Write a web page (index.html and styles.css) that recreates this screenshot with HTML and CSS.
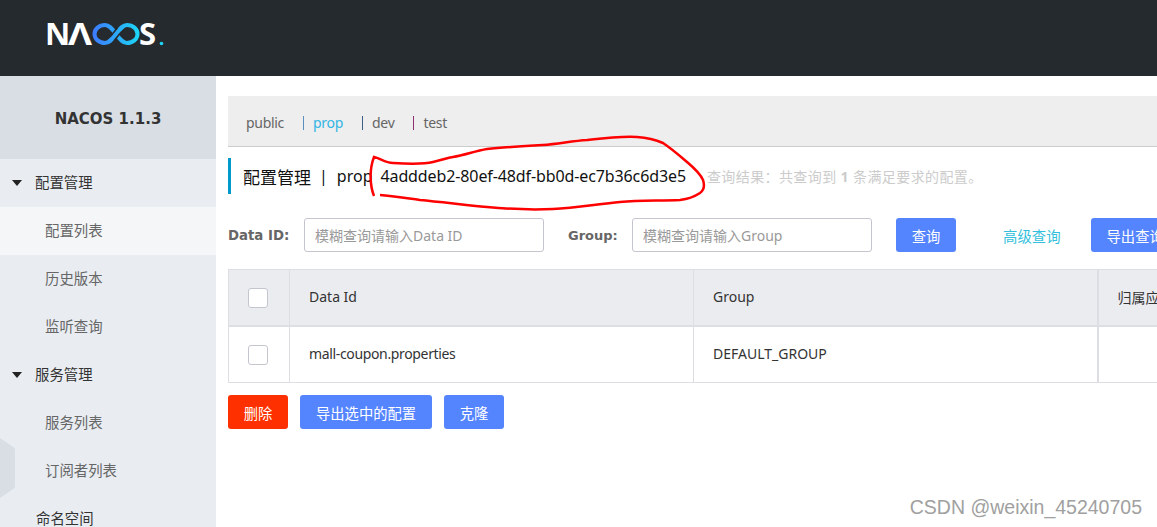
FILE: index.html
```html
<!DOCTYPE html>
<html lang="zh-CN">
<head>
    <meta charset="UTF-8">
    <title>Nacos</title>
    <link rel="stylesheet" href="styles.css">
</head>
<body>
    <header class="header">
        <svg class="logo" width="128" height="44" viewBox="-4 0 128 44">
            <defs>
                <linearGradient id="loop" gradientUnits="userSpaceOnUse" x1="46" x2="92" y1="22" y2="22">
                    <stop offset="0" stop-color="#3d7bff"/>
                    <stop offset="1" stop-color="#1cd6f5"/>
                </linearGradient>
            </defs>
            <text class="logo-letter" x="-2" y="33">N</text>
            <text class="logo-letter" x="21" y="33" textLength="24" lengthAdjust="spacingAndGlyphs">Λ</text>
            <path d="M69 22C65.500 17.500 62.500 13 58 13A10.500 9 0 0 0 58 31C62.500 31 65.500 26.500 69 22C72.500 17.500 75.500 13 80 13A10.500 9 0 0 1 80 31C75.500 31 72.500 26.500 69 22Z" fill="none" stroke="url(#loop)" stroke-width="4"/>
            <path d="M65.500 26.500L72.500 17.500" stroke="#252a2f" stroke-width="7"/>
            <path d="M62 29.500C65 27.500 67 24.500 69 22C71 19.500 73 16.500 76 14.500" fill="none" stroke="url(#loop)" stroke-width="4"/>
            <text class="logo-letter" x="92" y="33">S</text>
            <circle cx="114.500" cy="31.500" r="1.800" fill="#1cd6f5"/>
        </svg>
    </header>
    <div class="layout">
        <aside class="sidebar">
            <div class="version">NACOS 1.1.3</div>
            <div class="menu-group"><span class="caret"></span>配置管理</div>
            <div class="menu-item active">配置列表</div>
            <div class="menu-item">历史版本</div>
            <div class="menu-item">监听查询</div>
            <div class="menu-group"><span class="caret"></span>服务管理</div>
            <div class="menu-item">服务列表</div>
            <div class="menu-item">订阅者列表</div>
            <div class="menu-group plain">命名空间</div>
            <div class="hexagon"></div>
        </aside>
        <main class="content">
            <div class="tabs">
                <span class="tab">public</span>
                <span class="tab"><i class="sep sep-blue"></i><span class="current">prop</span></span>
                <span class="tab"><i class="sep sep-navy"></i>dev</span>
                <span class="tab"><i class="sep sep-purple"></i>test</span>
            </div>
            <div class="title">
                <span class="title-main">配置管理</span>
                <span class="title-bar">|</span>
                <span class="title-ns">prop</span>
                <span class="title-id">4adddeb2-80ef-48df-bb0d-ec7b36c6d3e5</span>
                <span class="title-note">查询结果：共查询到 <b>1</b> 条满足要求的配置。</span>
            </div>
            <div class="search">
                <label class="search-label">Data ID:</label>
                <input class="search-input" placeholder="模糊查询请输入Data ID">
                <label class="search-label label-group">Group:</label>
                <input class="search-input" placeholder="模糊查询请输入Group">
                <button class="btn btn-short btn-query">查询</button>
                <a class="advanced">高级查询</a>
                <button class="btn btn-export">导出查询结果</button>
            </div>
            <table class="config-table">
                <colgroup>
                    <col class="col-check"><col class="col-wide"><col class="col-wide"><col class="col-app">
                </colgroup>
                <thead>
                    <tr>
                        <th class="cell-check"><span class="checkbox"></span></th>
                        <th>Data Id</th>
                        <th class="cell-group">Group</th>
                        <th>归属应用</th>
                    </tr>
                </thead>
                <tbody>
                    <tr>
                        <td class="cell-check"><span class="checkbox"></span></td>
                        <td class="cell-name">mall-coupon.properties</td>
                        <td class="cell-group">DEFAULT_GROUP</td>
                        <td></td>
                    </tr>
                </tbody>
            </table>
            <div class="actions">
                <button class="btn btn-short btn-danger">删除</button>
                <button class="btn">导出选中的配置</button>
                <button class="btn btn-short">克隆</button>
            </div>
        </main>
    </div>
    <svg class="scribble" width="1157" height="527" viewBox="0 0 1157 527">
        <path d="M374 196C370 186 369 170 374 157C380 158 385 163 393 163C410 164 425 164 433 162C442 160 447 158 453 157C465 155 475 151 487 149C505 147 525 146 543 145C558 144 572 141 587 140C605 138 622 136 637 137C650 138 656 140 663 143C672 149 680 156 687 162C694 168 700 173 703 180C705 186 704 190 700 193C694 197 688 199 680 200C660 201 640 200 620 202C598 204 575 208 553 209C530 210 508 209 487 207C465 205 442 202 420 200C405 198 392 196 380 195" fill="none" stroke="#f00" stroke-width="2.500"/>
    </svg>
    <div class="watermark">CSDN @weixin_45240705</div>
</body>
</html>
```

FILE: styles.css
```css
html, body {
    height: 100%;
}
body {
    margin: 0;
    overflow: hidden;
    position: relative;
    font-family: "Noto Sans", "Noto Sans CJK SC", sans-serif;
    font-size: 14px;
    color: #333;
    background: #fff;
}
.header {
    height: 76px;
    background: #252a2f;
    padding: 0 0 9px 43px;
    display: flex;
    align-items: center;
    box-sizing: border-box;
}
.logo-letter {
    font-family: "Open Sans", sans-serif;
    font-size: 31px;
    font-weight: 700;
    fill: #fff;
}
.layout {
    display: flex;
    height: 451px;
}
.sidebar {
    width: 216px;
    flex: none;
    background: #e9edf2;
    position: relative;
    overflow: hidden;
    font-size: 14.400px;
}
.version {
    height: 83px;
    line-height: 87px;
    background: #d9dee5;
    text-align: center;
    font-family: "DejaVu Sans", sans-serif;
    font-size: 15px;
    font-weight: bold;
    color: #333;
}
.menu-group {
    height: 48px;
    line-height: 48px;
    padding-left: 12px;
    color: #333;
    display: flex;
    align-items: center;
}
.menu-group.plain {
    padding-left: 36px;
}
.caret {
    width: 0;
    height: 0;
    margin-right: 13px;
    border-left: 5.500px solid transparent;
    border-right: 5.500px solid transparent;
    border-top: 6px solid #222;
}
.menu-item {
    height: 48px;
    line-height: 48px;
    padding-left: 45px;
    color: #666;
}
.menu-item.active {
    background: #f4f6f8;
}
.hexagon {
    position: absolute;
    left: -15px;
    top: 362px;
    width: 30px;
    height: 60px;
    background: #d9dee5;
    clip-path: polygon(50% 0, 100% 17%, 100% 83%, 50% 100%, 0 83%, 0 17%);
}
.content {
    flex: none;
    width: 1100px;
    padding: 20px 0 0 12px;
}
.tabs {
    height: 47px;
    background: #eee;
    border-bottom: 1px solid #ccc;
    padding: 3px 0 0 18px;
    display: flex;
    align-items: center;
    color: #666;
    letter-spacing: -0.300px;
}
.tab {
    margin-right: 19px;
    display: flex;
    align-items: center;
}
.sep {
    width: 1px;
    height: 14px;
    margin-right: 9px;
}
.sep-blue { background: #5a8fc0; }
.sep-navy { background: #3c5f8a; }
.sep-purple { background: #8f2f6f; }
.current {
    color: #33b5e5;
}
.title {
    margin-top: 11px;
    height: 36px;
    border-left: 3px solid #09c;
    padding-left: 12px;
    display: flex;
    align-items: center;
    color: #111;
    font-size: 16px;
    white-space: nowrap;
}
.title-main {
    font-size: 17px;
}
.title-bar {
    margin: 0 9px 0 8px;
}
.title-ns {
    margin-right: 8px;
}
.title-id {
    letter-spacing: -0.110px;
}
.title-note {
    margin-left: 21px;
    font-size: 14px;
    letter-spacing: 0.400px;
    color: #ccc;
}
.search {
    margin-top: 24px;
    display: flex;
    align-items: center;
    height: 34px;
    white-space: nowrap;
}
.search-label {
    width: 76px;
    flex: none;
    font-family: "DejaVu Sans", sans-serif;
    font-weight: bold;
    font-size: 13.300px;
    color: #666;
}
.label-group {
    width: 64px;
    margin-left: 24px;
    font-size: 13px;
}
.search-input {
    width: 240px;
    height: 34px;
    box-sizing: border-box;
    flex: none;
    padding: 0 10px;
    border: 1px solid #c4c6cf;
    border-radius: 3px;
    font-family: inherit;
    font-size: 14px;
    outline: none;
}
.search-input::placeholder {
    color: #999;
}
.btn {
    height: 34px;
    padding: 0 16px;
    border: none;
    border-radius: 3px;
    background: #5584ff;
    color: #fff;
    font-family: inherit;
    font-size: 14.300px;
    flex: none;
}
.btn-short {
    width: 60px;
    padding: 0;
}
.btn-query {
    margin-left: 24px;
}
.advanced {
    margin-left: 47px;
    font-size: 14.400px;
    color: #33bfdc;
}
.btn-export {
    margin-left: 30px;
}
.btn-danger {
    background: #ff3000;
}
.config-table {
    margin-top: 17px;
    width: 1100px;
    table-layout: fixed;
    border-collapse: collapse;
    border: 1px solid #dcdee3;
    color: #333;
}
.col-check { width: 61px; }
.col-wide { width: 404px; }
.col-app { width: 231px; }
.config-table th,
.config-table td {
    height: 57px;
    padding: 0 19px 1px;
    text-align: left;
    font-weight: normal;
    border-right: 1px solid #dcdee3;
    box-sizing: border-box;
}
.config-table th {
    height: 56px;
    background: #ebecf0;
    border-bottom: 2px solid #dcdee3;
}
.config-table .cell-group {
    border-right-width: 2px;
}
.config-table .cell-name {
    letter-spacing: -0.350px;
}
.config-table .cell-check {
    padding: 0 2px 0 0;
    text-align: center;
}
.checkbox {
    display: inline-block;
    width: 18px;
    height: 18px;
    border: 1px solid #c4c6cf;
    border-radius: 3px;
    background: #fff;
    vertical-align: middle;
}
.actions {
    margin-top: 12px;
    display: flex;
    gap: 12px;
}
.scribble {
    position: absolute;
    left: 0;
    top: 0;
    pointer-events: none;
}
.watermark {
    position: absolute;
    right: 15px;
    bottom: 8px;
    font-family: "Liberation Sans", sans-serif;
    font-size: 19.500px;
    color: #a0a0a0;
}
```
